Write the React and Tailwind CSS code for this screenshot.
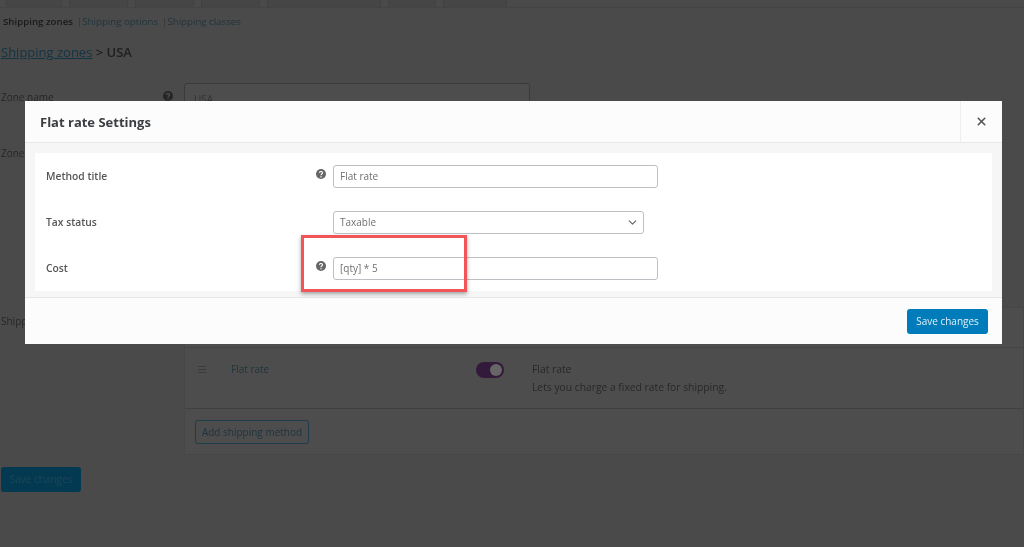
import { ChevronDown, X } from 'lucide-react';

const font = 'font-["Open_Sans",sans-serif]';

const tabs = [56, 59, 59, 59, 114, 48, 64];

const HelpIcon = ({ className = '', glyph = '#fff' }) => (
  <svg viewBox="0 0 16 16" className={`w-[10px] h-[10px] ${className}`}>
    <circle cx="8" cy="8" r="8" fill="currentColor" />
    <path d="M5.6 6.2a2.4 2.2 0 1 1 3.6 1.9c-.8.5-1.2.9-1.2 1.7" fill="none" stroke={glyph} strokeWidth="1.8" />
    <circle cx="8" cy="12.4" r="1.1" fill={glyph} />
  </svg>
);

function Background() {
  return (
    <div className="h-[547px] overflow-hidden bg-[#4a4a4a] text-[#222222]">
      {/* onglets, coupés par le haut */}
      <div className="flex h-[8px] gap-[7px] pl-[6px] border-b border-[#444444]">
        {tabs.map((w, i) => (
          <div key={i} style={{ width: w }} className="border-x border-[#414141] bg-[#464646]" />
        ))}
      </div>

      <div className="flex items-center mt-[8px] pl-[3px] h-[12px] text-[9.7px] leading-none">
        <span className="font-semibold text-[#1a1a1a]">Shipping zones</span>
        <span className="ml-[4px] text-[#333333]">|</span>
        <span className="text-[#22353d]">Shipping options</span>
        <span className="ml-[4px] text-[#333333]">|</span>
        <span className="text-[#22353d]">Shipping classes</span>
      </div>

      <div className="mt-[14px] pl-[1px] h-[20px] text-[13px] leading-[20px] font-medium">
        <span className="underline text-[#133444]">Shipping zones</span>
        <span className="font-semibold text-[#202020]"> &gt; USA</span>
      </div>

      <div className="flex mt-[21px] h-[50px]">
        <div className="w-[184px] relative pl-[1px] pt-[7px] text-[10px] text-[#262626]">
          Zone name
          <HelpIcon glyph="#555555" className="absolute right-[11px] top-[8px] text-[#262626]" />
        </div>
        <div className="w-[346px] h-[30px] border border-[#3a3a3a] rounded-[3px] bg-[#4d4d4d] pl-[9px] pt-[8px] text-[10px] text-[#333333]">USA</div>
      </div>
      <div className="pl-[1px] mt-[13px] text-[10px] h-[14px] text-[#262626]">Zone regions</div>

      <div className="flex mt-[147px]">
        <div className="w-[184px] pl-[1px] pt-[7px] text-[10px] text-[#262626]">Shipping methods</div>
        <div className="w-[840px] h-[148px] border border-[#474747] bg-[#4d4d4d] flex flex-col">
          <div className="h-[40px] border-b border-[#454545]" />
          <div className="flex flex-1 border-b border-[#404040] pt-[13px] text-[10px]">
            <div className="w-[14px] ml-[13px] mt-[5px] flex flex-col gap-[2px]">
              <span className="block w-[8px] h-px bg-[#3a3a3a]" />
              <span className="block w-[8px] h-px bg-[#3a3a3a]" />
              <span className="block w-[8px] h-px bg-[#3a3a3a]" />
            </div>
            <div className="w-[245px] ml-[19px] mt-px text-[#22353d]">Flat rate</div>
            <div className="w-[28px] h-[16px] mt-[1px] rounded-full bg-[#331a3a] relative">
              <span className="absolute right-[2px] top-[2px] w-[12px] h-[12px] rounded-full bg-[#666666]" />
            </div>
            <div className="ml-[28px] -mt-px leading-[18px] text-[10.3px] text-[#282828]">
              <p>Flat rate</p>
              <p>Lets you charge a fixed rate for shipping.</p>
            </div>
          </div>
          <div className="h-[45px] pl-[10px] pt-[11px]">
            <div className="w-[114px] h-[24px] flex items-center justify-center rounded-[3px] border border-[#1d3d4c] text-[10px] text-[#20333d]">Add shipping method</div>
          </div>
        </div>
      </div>

      <div className="ml-[1px] mt-[12px] w-[80px] h-[25px] rounded-[3px] bg-[#033a52] flex items-center justify-center text-[10px] text-[#1f4558]">Save changes</div>
    </div>
  );
}

const Row = ({ label, help, children }) => (
  <div className="flex h-[46px] items-center">
    <div className="w-[292px] pl-[11px] pr-[1px] pt-[2px] flex items-center justify-between text-[10.3px]">
      <span className="font-semibold text-[#555555]">{label}</span>
      {help && <HelpIcon className="text-[#666666] -translate-y-[3px]" />}
    </div>
    <div className="ml-[6px]">{children}</div>
  </div>
);

function Modal() {
  return (
    <div className="absolute left-[25px] top-[101px] w-[977px] h-[243px] bg-[#fcfcfc] flex flex-col">
      <div className="h-[42px] flex border-b border-[#e8e8e8] shrink-0">
        <div className="flex-1 pl-[15px] pt-[3px] flex items-center text-[13px] font-bold text-[#3a3e42]">Flat rate Settings</div>
        <div className="w-[42px] border-l border-[#eeeeee] flex items-center justify-center text-[#555555]">
          <X size={13} strokeWidth={3} />
        </div>
      </div>

      <div className="h-[155px] bg-[#f6f6f6] border-b border-[#e6e6e6] px-[10px] pt-[10px] shrink-0">
        <div className="bg-white h-[138px]">
          <Row label="Method title" help>
            <div className="w-[325px] h-[23px] border border-[#bcc0c4] rounded-[3px] flex items-center pl-[6px] text-[10px] text-[#707070]">Flat rate</div>
          </Row>
          <Row label="Tax status">
            <div className="w-[311px] h-[23px] border border-[#bcc0c4] rounded-[3px] flex items-center justify-between pl-[6px] pr-[4px] text-[10px] text-[#707070]">
              Taxable
              <ChevronDown size={13} strokeWidth={2.5} className="text-[#707070]" />
            </div>
          </Row>
          <Row label="Cost" help>
            <div className="w-[325px] h-[23px] border border-[#bcc0c4] rounded-[3px] flex items-center pl-[6px] text-[10px] text-[#707070]">[qty] * 5</div>
          </Row>
        </div>
      </div>

      <div className="flex-1 flex items-center justify-end pr-[14px]">
        <div className="w-[81px] h-[25px] rounded-[3px] bg-[#007cba] flex items-center justify-center text-[10px] text-[#e0eff7]">Save changes</div>
      </div>
    </div>
  );
}

export default function App() {
  return (
    <div className={`relative w-[1024px] h-[547px] overflow-hidden blur-[0.5px] ${font}`}>
      <Background />
      <Modal />
      {/* encadré rouge de l'annotation */}
      <div className="absolute left-[301px] top-[235px] w-[166px] h-[57px] border-[3px] border-[#f25555] shadow-[0_2px_4px_rgba(0,0,0,0.35)]" />
    </div>
  );
}
